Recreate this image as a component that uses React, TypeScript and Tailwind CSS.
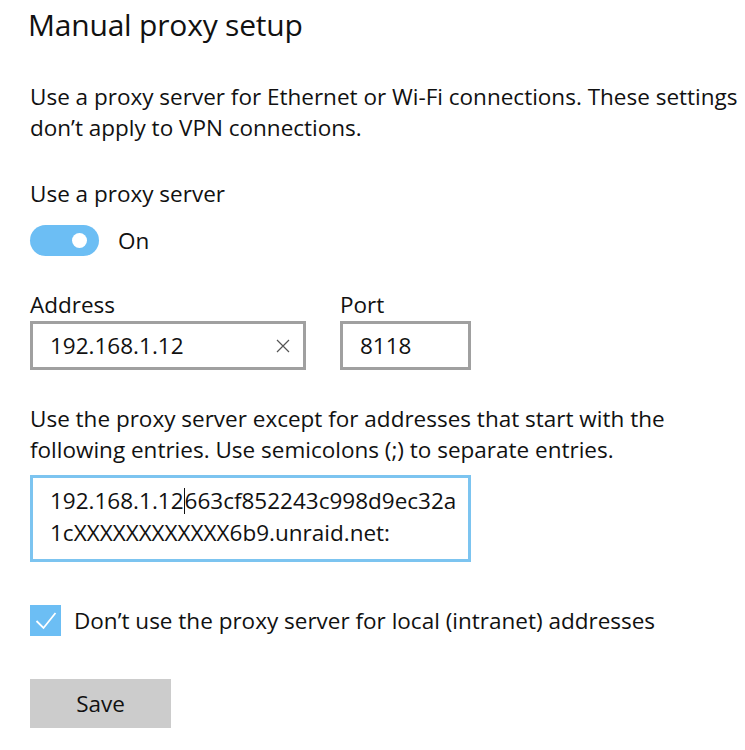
import React from 'react';

const font = { fontFamily: '"Open Sans", "Noto Sans", Arial, sans-serif' };

export default function App() {
  return (
    <div className="min-h-[750px] w-[745px] bg-white text-[#111] pl-[30px]" style={font}>
      <h1 className="text-[30px] leading-[40px] pt-[5px] -ml-[2px] tracking-[-0.2px]">Manual proxy setup</h1>

      <p className="mt-[36px] text-[22.5px] leading-[31px] w-[710px]">
        Use a proxy server for Ethernet or Wi-Fi connections. These settings don’t apply to VPN connections.
      </p>

      <div className="mt-[37px] text-[22.5px] leading-[28px]">Use a proxy server</div>

      <div className="mt-[17px] flex items-center gap-[19px]">
        <div className="w-[69px] h-[31px] rounded-full bg-[#6cbef4] flex items-center justify-end pr-[12px]">
          <div className="w-[15px] h-[15px] rounded-full bg-white" />
        </div>
        <span className="text-[22.5px] leading-[28px]">On</span>
      </div>

      <div className="mt-[35px] flex gap-[34px]">
        <div className="flex flex-col">
          <span className="text-[22.5px] leading-[28px]">Address</span>
          <div className="mt-[2px] w-[276px] h-[49px] border-[3px] border-[#a0a0a0] flex items-center pl-[17px] pr-[12px]">
            <span className="flex-1 text-[22.5px]">192.168.1.12</span>
            <svg width="16" height="16" viewBox="0 0 16 16" className="text-[#555]">
              <path d="M2 2 L14 14 M14 2 L2 14" stroke="currentColor" strokeWidth="1.2" />
            </svg>
          </div>
        </div>
        <div className="flex flex-col">
          <span className="text-[22.5px] leading-[28px]">Port</span>
          <div className="mt-[2px] w-[131px] h-[49px] border-[3px] border-[#a0a0a0] flex items-center pl-[17px]">
            <span className="text-[22.5px]">8118</span>
          </div>
        </div>
      </div>

      <p className="mt-[33px] text-[22.5px] leading-[31px] w-[710px]">
        Use the proxy server except for addresses that start with the following entries. Use semicolons (;) to separate entries.
      </p>

      <div className="mt-[10px] w-[441px] h-[87px] border-[3px] border-[#7cc4f0] pl-[17px] pt-[7px] text-[22.5px] leading-[32px]">
        <div className="flex items-center">
          <span>192.168.1.12</span>
          <span className="inline-block w-[1px] h-[26px] bg-[#111]" />
          <span>663cf852243c998d9ec32a</span>
        </div>
        <div>1cXXXXXXXXXXXX6b9.unraid.net:</div>
      </div>

      <div className="mt-[43px] flex items-center gap-[13px]">
        <div className="w-[31px] h-[31px] bg-[#6cbef4] flex items-center justify-center">
          <svg width="31" height="31" viewBox="0 0 31 31">
            <path d="M6.5 16 L13.5 23 L25.5 8" fill="none" stroke="white" strokeWidth="1.8" />
          </svg>
        </div>
        <span className="text-[22.5px] leading-[28px]">Don’t use the proxy server for local (intranet) addresses</span>
      </div>

      <button className="mt-[43px] w-[141px] h-[49px] bg-[#cccccc] text-[22.5px] text-[#111]" style={font}>Save</button>
    </div>
  );
}
